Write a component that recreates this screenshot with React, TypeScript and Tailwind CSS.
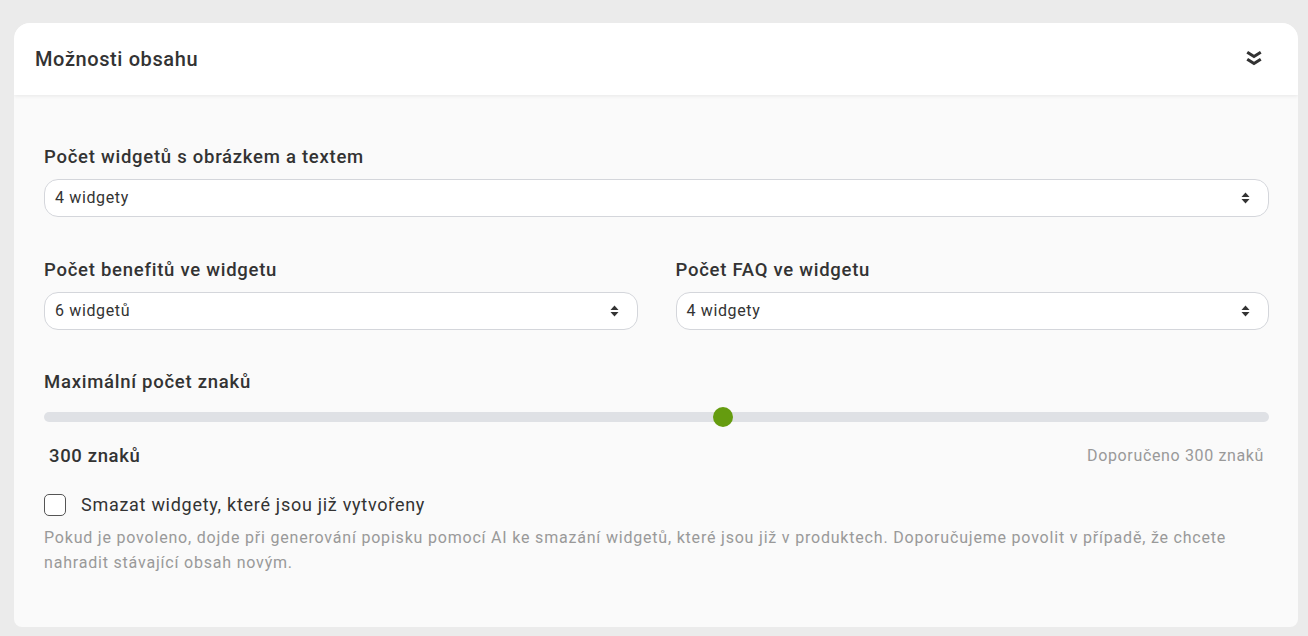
import React, { useState } from "react";

const font = { fontFamily: "Roboto, 'Noto Sans', sans-serif" };

function SortIcon() {
  return (
    <svg width="9" height="12" viewBox="0 0 9 12" className="text-[#333]">
      <path d="M4.5 0.5 L8.5 5 H0.5 Z" fill="currentColor" />
      <path d="M4.5 11.5 L8.5 7 H0.5 Z" fill="currentColor" />
    </svg>
  );
}

function ChevronsDown() {
  return (
    <svg width="18" height="20" viewBox="0 0 18 20" fill="none" stroke="#333" strokeWidth="3" strokeLinecap="square">
      <path d="M3.5 4 L9 7.5 L14.5 4" />
      <path d="M3.5 11 L9 14.5 L14.5 11" />
    </svg>
  );
}

function SelectBox({ value }: { value: string }) {
  return (
    <div className="flex h-[38px] items-center justify-between rounded-[14px] border border-[#d4d6db] bg-white pl-[10px] pr-[18px] text-[16px] tracking-[0.04em] text-[#333]">
      <span>{value}</span>
      <SortIcon />
    </div>
  );
}

function Label({ children }: { children: React.ReactNode }) {
  return (
    <div className="mb-[10px] text-[18.5px] font-medium leading-[24px] tracking-[0.04em] text-[#333]">{children}</div>
  );
}

export default function App() {
  const [remove, setRemove] = useState(false);
  const chars = 300;

  return (
    <div className="min-h-[636px] bg-[#ebebeb] pb-[9px] pl-[14px] pr-[10px] pt-[23px]" style={font}>
      <div className="overflow-hidden rounded-b-[8px] rounded-t-[16px] bg-[#fafafa]">
        <div className="relative z-10 flex h-[72px] items-center justify-between bg-white pl-[21px] pr-[35px] shadow-[0_1px_4px_rgba(0,0,0,0.08)]">
          <h2 className="text-[20px] font-medium tracking-[0.03em] text-[#333]">Možnosti obsahu</h2>
          <ChevronsDown />
        </div>

        <div className="pb-[52px] pl-[30px] pr-[29px] pt-[50px]">
          <Label>Počet widgetů s obrázkem a textem</Label>
          <SelectBox value="4 widgety" />

          <div className="mt-[41px] grid grid-cols-2 gap-[38px]">
            <div>
              <Label>Počet benefitů ve widgetu</Label>
              <SelectBox value="6 widgetů" />
            </div>
            <div>
              <Label>Počet FAQ ve widgetu</Label>
              <SelectBox value="4 widgety" />
            </div>
          </div>

          <div className="mt-[40px] text-[18.5px] font-medium leading-[24px] tracking-[0.04em] text-[#333]">
            Maximální počet znaků
          </div>
          <div className="relative mt-[18px] h-[10px] rounded-full bg-[#dfe1e5]">
            <div className="absolute left-[55.4%] top-1/2 h-[20px] w-[20px] -translate-x-1/2 -translate-y-1/2 rounded-full bg-[#659c0f]" />
          </div>
          <div className="mt-[22px] flex items-center justify-between leading-[24px] tracking-[0.04em]">
            <span className="pl-[5px] text-[18.5px] font-medium text-[#333]">{chars} znaků</span>
            <span className="pr-[5px] text-[16px] text-[#999]">Doporučeno {chars} znaků</span>
          </div>

          <label className="mt-[25px] flex cursor-pointer items-center gap-[15px] leading-[24px]">
            <input
              type="checkbox"
              checked={remove}
              onChange={() => setRemove(!remove)}
              className="h-[22px] w-[22px] appearance-none rounded-[5px] border border-[#555] bg-white"
            />
            <span className="text-[18px] tracking-[0.04em] text-[#333]">Smazat widgety, které jsou již vytvořeny</span>
          </label>
          <p className="mt-[8px] text-[16px] leading-[25px] tracking-[0.05em] text-[#999]">
            Pokud je povoleno, dojde při generování popisku pomocí AI ke smazání widgetů, které jsou již v produktech. Doporučujeme povolit v případě, že chcete nahradit stávající obsah novým.
          </p>
        </div>
      </div>
    </div>
  );
}
